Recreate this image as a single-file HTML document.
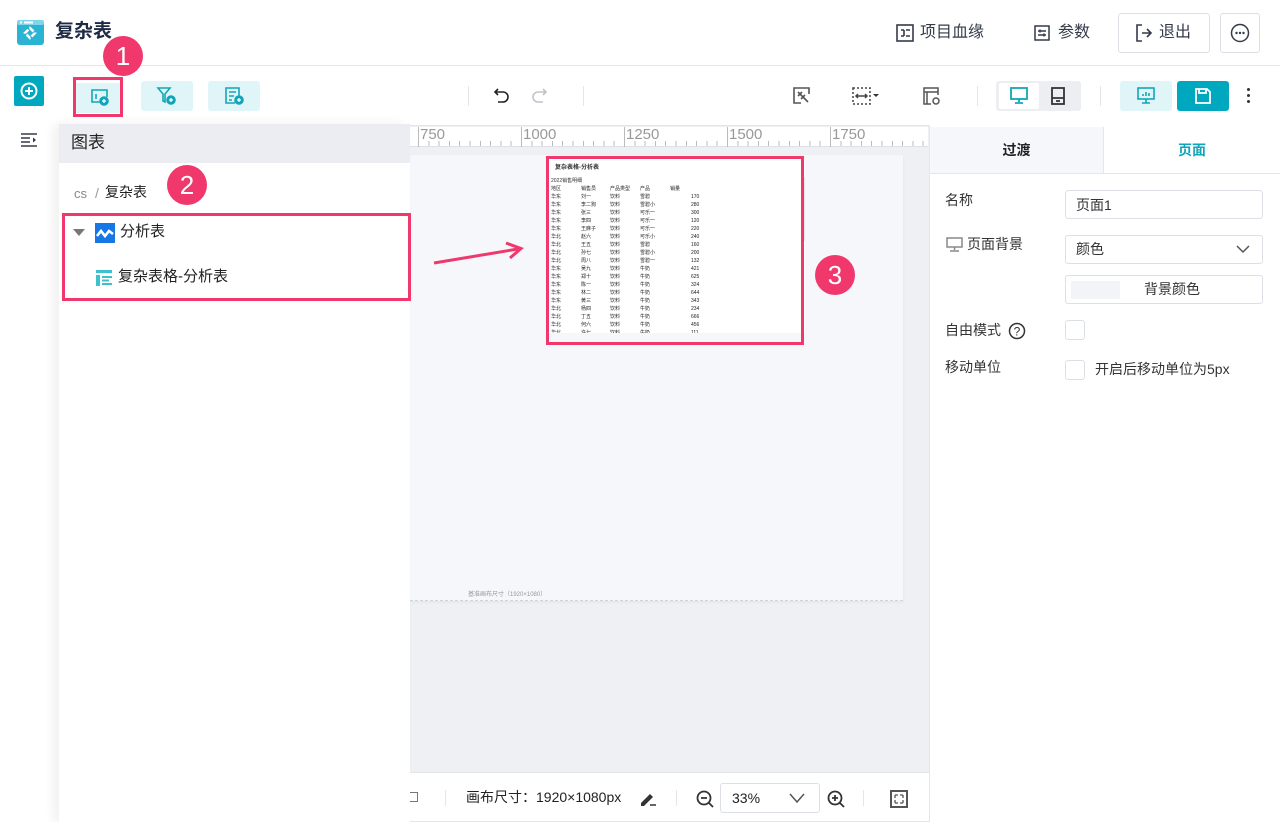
<!DOCTYPE html>
<html><head><meta charset="utf-8"><style>
*{box-sizing:border-box;margin:0;padding:0}
body{width:1280px;height:822px;overflow:hidden;background:#fff;font-family:"Liberation Sans","Noto Sans CJK SC",sans-serif;color:#333;position:relative;font-size:14px;line-height:1.2}
.abs{position:absolute}
.badge{position:absolute;width:40px;height:40px;border-radius:50%;background:#f0386c;color:#fff;font-size:26px;text-align:center;line-height:40px}
.pink{position:absolute;border:3px solid #f0386c}
.tb{position:absolute;top:81px;width:52px;height:30px;background:#e0f5f8;border-radius:3px}
.vsep{position:absolute;width:1px;background:#e4e6ea}
.row{position:absolute;left:0;width:360px;font-size:5px;color:#222;white-space:nowrap}
.row span{position:absolute}
.lbl{position:absolute;left:945px;font-size:14px;color:#333}
.box{position:absolute;border:1px solid #dcdfe6;border-radius:3px;background:#fff}
</style></head><body>
<div class="abs" style="left:0;top:0;width:1280px;height:66px;border-bottom:1px solid #e6e8eb"></div>
<svg class="abs" style="left:17px;top:20px" width="28" height="26" viewBox="0 0 28 26"><rect x="0" y="0" width="27" height="25" rx="3" fill="#2bb3d3"/><rect x="0" y="0" width="27" height="5" rx="2" fill="#7fd6ea"/><rect x="3" y="1.5" width="2" height="2" fill="#fff"/><rect x="7" y="1.5" width="9" height="2" fill="#fff"/><path d="M13 8l5 5-5 5-5-5z" fill="none" stroke="#fff" stroke-width="2.5" stroke-dasharray="5 2"/></svg>
<div class="abs" style="left:55px;top:21px;font-size:19px;font-weight:bold;color:#1f2a44">复杂表</div>
<svg class="abs" style="left:896px;top:24px" width="18" height="18" viewBox="0 0 18 18" fill="none" stroke="#333a4a" stroke-width="1.6"><rect x="1" y="1" width="16" height="16"/><path d="M5 6h3M5 12h3M8 6v6M10 6h4M10 12h4"/></svg>
<div class="abs" style="left:920px;top:23px;font-size:16px;color:#333a4a">项目血缘</div>
<svg class="abs" style="left:1034px;top:25px" width="16" height="16" viewBox="0 0 16 16" fill="none" stroke="#333a4a" stroke-width="1.5"><rect x="1" y="1" width="14" height="14"/><path d="M4 6h8M4 10h8M6 4.5v3M10 8.5v3"/></svg>
<div class="abs" style="left:1058px;top:23px;font-size:16px;color:#333a4a">参数</div>
<div class="box" style="left:1118px;top:13px;width:92px;height:40px"></div>
<svg class="abs" style="left:1135px;top:24px" width="18" height="18" viewBox="0 0 18 18" fill="none" stroke="#333a4a" stroke-width="1.6"><path d="M7 1H2v16h5M7 9h9M12 5l4 4-4 4"/></svg>
<div class="abs" style="left:1159px;top:23px;font-size:16px;color:#333a4a">退出</div>
<div class="box" style="left:1220px;top:13px;width:40px;height:40px"></div>
<svg class="abs" style="left:1230px;top:23px" width="20" height="20" viewBox="0 0 20 20"><circle cx="10" cy="10" r="8.5" fill="none" stroke="#333a4a" stroke-width="1.5"/><circle cx="6.5" cy="10" r="1.2" fill="#333a4a"/><circle cx="10" cy="10" r="1.2" fill="#333a4a"/><circle cx="13.5" cy="10" r="1.2" fill="#333a4a"/></svg>

<div class="abs" style="left:14px;top:76px;width:30px;height:30px;background:#00a8bf;border-radius:2px"></div>
<svg class="abs" style="left:19px;top:81px" width="20" height="20" viewBox="0 0 20 20" fill="none" stroke="#fff" stroke-width="2"><circle cx="10" cy="10" r="7.5"/><path d="M10 6v8M6 10h8"/></svg>
<svg class="abs" style="left:21px;top:133px" width="16" height="14" viewBox="0 0 16 14" fill="none" stroke="#333a4a" stroke-width="1.6"><path d="M0 1h16M0 5h9M0 9h9M0 13h16"/><path d="M12 4.5l3 2.5-3 2.5z" fill="#333a4a" stroke="none"/></svg>

<div class="tb" style="left:74px;width:48px;top:83px;height:30px"></div>
<div class="pink" style="left:73px;top:77px;width:50px;height:40px"></div>
<svg class="abs" style="left:90px;top:87px" width="20" height="20" viewBox="0 0 20 20" fill="none" stroke="#11a6b7" stroke-width="1.6"><path d="M11 15H2V3h15v7"/><path d="M6 7v5"/><circle cx="14" cy="14" r="4" fill="#11a6b7"/><path d="M14 12v4M12 14h4" stroke="#fff" stroke-width="1.3"/></svg>
<div class="tb" style="left:141px"></div>
<svg class="abs" style="left:156px;top:86px" width="22" height="20" viewBox="0 0 22 20" fill="none" stroke="#11a6b7" stroke-width="1.6"><path d="M2 2h12l-5 6v8l-2-1V8z"/><circle cx="15" cy="14" r="4" fill="#11a6b7"/><path d="M15 12v4M13 14h4" stroke="#fff" stroke-width="1.3"/></svg>
<div class="tb" style="left:208px"></div>
<svg class="abs" style="left:224px;top:86px" width="22" height="20" viewBox="0 0 22 20" fill="none" stroke="#11a6b7" stroke-width="1.6"><path d="M11 17H2V2h13v8M5 6h7M5 10h5M5 14h3"/><circle cx="15" cy="14" r="4" fill="#11a6b7"/><path d="M15 12v4M13 14h4" stroke="#fff" stroke-width="1.3"/></svg>
<div class="badge" style="left:103px;top:36px">1</div>
<div class="vsep" style="left:468px;top:86px;height:20px"></div>
<svg class="abs" style="left:493px;top:86px" width="18" height="18" viewBox="0 0 18 18" fill="none" stroke="#222" stroke-width="1.6"><path d="M5 3L2 6l3 3"/><path d="M2 6h8a5 5 0 010 10H5"/></svg>
<svg class="abs" style="left:530px;top:86px" width="18" height="18" viewBox="0 0 18 18" fill="none" stroke="#c0c4cc" stroke-width="1.6"><path d="M13 3l3 3-3 3"/><path d="M16 6H8a5 5 0 000 10h5"/></svg>
<div class="vsep" style="left:583px;top:86px;height:20px"></div>
<svg class="abs" style="left:793px;top:87px" width="18" height="18" viewBox="0 0 18 18" fill="none" stroke="#555" stroke-width="1.6"><path d="M8 16H1V1h15v6"/><path d="M5 5l10 10M9 5l-4 4M12 8l-4 4"/></svg>
<svg class="abs" style="left:852px;top:87px" width="30" height="18" viewBox="0 0 30 18" fill="none" stroke="#444" stroke-width="1.5"><rect x="1" y="1" width="17" height="16" stroke-dasharray="2 2"/><path d="M4 9h11M6 7l-2 2 2 2M13 7l2 2-2 2"/><path d="M21 7h6l-3 3z" fill="#333" stroke="none"/></svg>
<svg class="abs" style="left:923px;top:87px" width="20" height="20" viewBox="0 0 20 20" fill="none" stroke="#555" stroke-width="1.5"><path d="M8 17H1V1h14v7M1 5h14M4 5v12"/><circle cx="13" cy="14" r="3"/></svg>
<div class="vsep" style="left:977px;top:86px;height:20px"></div>
<div class="abs" style="left:996px;top:81px;width:85px;height:30px;background:#eceef2;border-radius:3px"></div>
<div class="abs" style="left:999px;top:83px;width:40px;height:26px;background:#fff;border-radius:2px"></div>
<svg class="abs" style="left:1010px;top:87px" width="18" height="18" viewBox="0 0 18 18" fill="none" stroke="#11a6b7" stroke-width="1.8"><rect x="1" y="1" width="16" height="11"/><path d="M9 12v3M5 16h8"/></svg>
<svg class="abs" style="left:1051px;top:87px" width="14" height="18" viewBox="0 0 14 18" fill="none" stroke="#333" stroke-width="1.8"><rect x="1" y="1" width="12" height="16"/><path d="M1 11h12M5 14h4"/></svg>
<div class="vsep" style="left:1100px;top:86px;height:20px"></div>
<div class="abs" style="left:1120px;top:81px;width:52px;height:30px;background:#e0f5f8;border-radius:3px"></div>
<svg class="abs" style="left:1137px;top:87px" width="18" height="18" viewBox="0 0 18 18" fill="none" stroke="#11a6b7" stroke-width="1.6"><rect x="1" y="1" width="16" height="11"/><path d="M9 12v4M5 16h8M6 9V7M9 9V5M12 9V6"/></svg>
<div class="abs" style="left:1177px;top:81px;width:52px;height:30px;background:#00a8bf;border-radius:3px"></div>
<svg class="abs" style="left:1195px;top:88px" width="16" height="16" viewBox="0 0 16 16" fill="none" stroke="#fff" stroke-width="1.8"><path d="M1 1h11l3 3v11H1z"/><path d="M4 1v4h7V1"/></svg>
<div class="abs" style="left:1247px;top:88px;width:3px;height:3px;background:#333;border-radius:50%;box-shadow:0 6px 0 #333,0 12px 0 #333"></div>

<div class="abs" style="left:59px;top:125px;width:870px;height:648px;background:#eef0f4;border-top:1px solid #e4e6ea"></div>
<div class="abs" style="left:410px;top:127px;width:518px;height:20px;background:#fff;border-bottom:1px solid #dcdfe6;
background-image:repeating-linear-gradient(90deg,#bbb 0 1px,transparent 1px 10.3px);background-size:100% 5px;background-repeat:no-repeat;background-position:8px 14px"></div>
<div class="abs" style="left:418px;top:127px;width:1px;height:20px;background:#bbb"></div>
<div class="abs" style="left:521px;top:127px;width:1px;height:20px;background:#bbb"></div>
<div class="abs" style="left:624px;top:127px;width:1px;height:20px;background:#bbb"></div>
<div class="abs" style="left:727px;top:127px;width:1px;height:20px;background:#bbb"></div>
<div class="abs" style="left:830px;top:127px;width:1px;height:20px;background:#bbb"></div>
<div class="abs" style="left:420px;top:126px;font-size:15px;color:#999">750</div>
<div class="abs" style="left:523px;top:126px;font-size:15px;color:#999">1000</div>
<div class="abs" style="left:626px;top:126px;font-size:15px;color:#999">1250</div>
<div class="abs" style="left:729px;top:126px;font-size:15px;color:#999">1500</div>
<div class="abs" style="left:832px;top:126px;font-size:15px;color:#999">1750</div>
<div class="abs" style="left:410px;top:155px;width:493px;height:446px;background:#f6f7fa;border-bottom:1px dashed #d0d3da;box-shadow:0 1px 3px rgba(0,0,0,.06)"></div>
<div class="abs" style="left:468px;top:592px;font-size:6px;color:#999">基准画布尺寸（1920×1080）</div>
<div class="abs" style="left:549px;top:159px;width:256px;height:174px;background:#fff;overflow:hidden">
<div class="abs" style="left:6px;top:6px;font-size:6px;font-weight:bold;color:#333">复杂表格-分析表</div>
<div class="abs" style="left:2px;top:19px;font-size:5px;color:#333">2022销售明细</div>
<div class="abs" style="left:255px;top:18px;width:2px;height:64px;background:#e4e6ea"></div>
<div class="row" style="top:27px"><span style="left:2px">地区</span><span style="left:32px">销售员</span><span style="left:61px">产品类型</span><span style="left:91px">产品</span><span style="left:121px">销量</span></div>
<div class="row" style="top:35px"><span style="left:2px">华东</span><span style="left:32px">刘一</span><span style="left:61px">饮料</span><span style="left:91px">雪碧</span><span style="left:142px">170</span></div>
<div class="row" style="top:43px"><span style="left:2px">华东</span><span style="left:32px">李二狗</span><span style="left:61px">饮料</span><span style="left:91px">雪碧小</span><span style="left:142px">280</span></div>
<div class="row" style="top:51px"><span style="left:2px">华东</span><span style="left:32px">张三</span><span style="left:61px">饮料</span><span style="left:91px">可乐一</span><span style="left:142px">300</span></div>
<div class="row" style="top:59px"><span style="left:2px">华东</span><span style="left:32px">李四</span><span style="left:61px">饮料</span><span style="left:91px">可乐一</span><span style="left:142px">120</span></div>
<div class="row" style="top:67px"><span style="left:2px">华东</span><span style="left:32px">王麻子</span><span style="left:61px">饮料</span><span style="left:91px">可乐一</span><span style="left:142px">220</span></div>
<div class="row" style="top:75px"><span style="left:2px">华北</span><span style="left:32px">赵六</span><span style="left:61px">饮料</span><span style="left:91px">可乐小</span><span style="left:142px">240</span></div>
<div class="row" style="top:83px"><span style="left:2px">华北</span><span style="left:32px">王五</span><span style="left:61px">饮料</span><span style="left:91px">雪碧</span><span style="left:142px">160</span></div>
<div class="row" style="top:91px"><span style="left:2px">华北</span><span style="left:32px">孙七</span><span style="left:61px">饮料</span><span style="left:91px">雪碧小</span><span style="left:142px">200</span></div>
<div class="row" style="top:99px"><span style="left:2px">华北</span><span style="left:32px">周八</span><span style="left:61px">饮料</span><span style="left:91px">雪碧一</span><span style="left:142px">132</span></div>
<div class="row" style="top:107px"><span style="left:2px">华东</span><span style="left:32px">吴九</span><span style="left:61px">饮料</span><span style="left:91px">牛奶</span><span style="left:142px">421</span></div>
<div class="row" style="top:115px"><span style="left:2px">华东</span><span style="left:32px">郑十</span><span style="left:61px">饮料</span><span style="left:91px">牛奶</span><span style="left:142px">625</span></div>
<div class="row" style="top:123px"><span style="left:2px">华东</span><span style="left:32px">陈一</span><span style="left:61px">饮料</span><span style="left:91px">牛奶</span><span style="left:142px">324</span></div>
<div class="row" style="top:131px"><span style="left:2px">华东</span><span style="left:32px">林二</span><span style="left:61px">饮料</span><span style="left:91px">牛奶</span><span style="left:142px">644</span></div>
<div class="row" style="top:139px"><span style="left:2px">华东</span><span style="left:32px">黄三</span><span style="left:61px">饮料</span><span style="left:91px">牛奶</span><span style="left:142px">343</span></div>
<div class="row" style="top:147px"><span style="left:2px">华北</span><span style="left:32px">杨四</span><span style="left:61px">饮料</span><span style="left:91px">牛奶</span><span style="left:142px">234</span></div>
<div class="row" style="top:155px"><span style="left:2px">华北</span><span style="left:32px">丁五</span><span style="left:61px">饮料</span><span style="left:91px">牛奶</span><span style="left:142px">666</span></div>
<div class="row" style="top:163px"><span style="left:2px">华北</span><span style="left:32px">何六</span><span style="left:61px">饮料</span><span style="left:91px">牛奶</span><span style="left:142px">456</span></div>
<div class="row" style="top:171px"><span style="left:2px">华北</span><span style="left:32px">许七</span><span style="left:61px">饮料</span><span style="left:91px">牛奶</span><span style="left:142px">111</span></div>
</div>
<div class="pink" style="left:546px;top:156px;width:258px;height:189px"></div>
<div class="badge" style="left:815px;top:255px">3</div>
<svg class="abs" style="left:430px;top:240px" width="95" height="28" viewBox="0 0 95 28"><path d="M4 23L88 9" stroke="#f0386c" stroke-width="3" fill="none"/><path d="M76 3L91 8.5 80 18" stroke="#f0386c" stroke-width="3" fill="none"/></svg>

<div class="abs" style="left:59px;top:772px;width:870px;height:50px;background:#fff;border-top:1px solid #e4e6ea;border-bottom:1px solid #e4e6ea"></div>
<div class="abs" style="left:407px;top:792px;width:11px;height:10px;border:1px solid #777"></div>
<div class="vsep" style="left:445px;top:790px;height:16px"></div>
<div class="abs" style="left:466px;top:789px;font-size:14px;color:#222">画布尺寸：1920×1080px</div>
<svg class="abs" style="left:638px;top:790px" width="20" height="16" viewBox="0 0 20 16"><path d="M3 13l9-9 3 3-9 9H3z" fill="#333"/><path d="M12 15h6" stroke="#333" stroke-width="1.5"/></svg>
<div class="vsep" style="left:676px;top:790px;height:16px"></div>
<svg class="abs" style="left:695px;top:789px" width="20" height="20" viewBox="0 0 20 20" fill="none" stroke="#333" stroke-width="1.8"><circle cx="9" cy="9" r="6.5"/><path d="M6 9h6M14 14l4 4"/></svg>
<div class="box" style="left:720px;top:783px;width:100px;height:30px"></div>
<div class="abs" style="left:732px;top:790px;font-size:14px;color:#222">33%</div>
<svg class="abs" style="left:788px;top:792px" width="18" height="12" viewBox="0 0 18 12" fill="none" stroke="#555" stroke-width="1.5"><path d="M2 2l7 8 7-8"/></svg>
<svg class="abs" style="left:826px;top:789px" width="20" height="20" viewBox="0 0 20 20" fill="none" stroke="#333" stroke-width="1.8"><circle cx="9" cy="9" r="6.5"/><path d="M6 9h6M9 6v6M14 14l4 4"/></svg>
<div class="vsep" style="left:863px;top:790px;height:16px"></div>
<svg class="abs" style="left:890px;top:790px" width="18" height="18" viewBox="0 0 18 18" fill="none" stroke="#555" stroke-width="2"><rect x="1" y="1" width="16" height="16"/><path d="M5 5h3M5 5v3M13 5h-3M13 5v3M5 13h3M5 13v-3M13 13h-3M13 13v-3" stroke-width="1.3"/></svg>

<div class="abs" style="left:59px;top:124px;width:351px;height:698px;background:#fff;box-shadow:-6px 0 10px rgba(0,0,0,.06)"></div>
<div class="abs" style="left:59px;top:124px;width:351px;height:39px;background:#ecedf2"></div>
<div class="abs" style="left:71px;top:133px;font-size:17px;color:#222">图表</div>
<div class="abs" style="left:74px;top:186px;font-size:13px;color:#888">cs</div>
<div class="abs" style="left:95px;top:185px;font-size:14px;color:#999">/</div>
<div class="abs" style="left:105px;top:184px;font-size:14px;color:#222">复杂表</div>
<div class="badge" style="left:167px;top:165px">2</div>
<div class="pink" style="left:62px;top:213px;width:349px;height:88px"></div>
<svg class="abs" style="left:73px;top:229px" width="12" height="8" viewBox="0 0 12 8"><path d="M0 0h12L6 7z" fill="#777"/></svg>
<svg class="abs" style="left:95px;top:223px" width="20" height="20" viewBox="0 0 20 20"><rect width="20" height="20" fill="#1677e5"/><path d="M2 13l4-5 4 5 4-5 4 3" stroke="#fff" stroke-width="2.6" fill="none"/></svg>
<div class="abs" style="left:120px;top:223px;font-size:15px;color:#222">分析表</div>
<svg class="abs" style="left:96px;top:270px" width="16" height="16" viewBox="0 0 16 16"><rect x="0" y="0" width="16" height="3" fill="#3ec1cf"/><rect x="0" y="5" width="4" height="11" fill="#3ec1cf"/><rect x="6" y="6" width="10" height="2" fill="#3ec1cf"/><rect x="6" y="13" width="10" height="2" fill="#3ec1cf"/><rect x="6" y="9.5" width="7" height="2" fill="#3ec1cf"/></svg>
<div class="abs" style="left:118px;top:268px;font-size:15px;color:#222">复杂表格-分析表</div>

<div class="abs" style="left:929px;top:125px;width:351px;height:697px;background:#fff;border-left:1px solid #e4e6ea"></div>
<div class="abs" style="left:930px;top:127px;width:173px;height:47px;background:#f5f7fa;border-bottom:1px solid #e4e6ea;text-align:center;line-height:47px;font-size:14px;font-weight:bold;color:#222">过渡</div>
<div class="abs" style="left:1103px;top:127px;width:177px;height:47px;background:#fff;border-bottom:1px solid #e4e6ea;border-left:1px solid #e4e6ea;text-align:center;line-height:47px;font-size:14px;font-weight:bold;color:#11a6b7">页面</div>
<div class="lbl" style="top:192px">名称</div>
<div class="box" style="left:1065px;top:190px;width:198px;height:29px"></div>
<div class="abs" style="left:1076px;top:197px;font-size:14px;color:#333">页面1</div>
<svg class="abs" style="left:946px;top:237px" width="17" height="15" viewBox="0 0 17 15" fill="none" stroke="#888" stroke-width="1.5"><rect x="1" y="1" width="15" height="9"/><path d="M8.5 10v3M4 14h9"/></svg>
<div class="lbl" style="left:967px;top:236px">页面背景</div>
<div class="box" style="left:1065px;top:235px;width:198px;height:29px"></div>
<div class="abs" style="left:1076px;top:241px;font-size:14px;color:#333">颜色</div>
<svg class="abs" style="left:1235px;top:244px" width="16" height="10" viewBox="0 0 16 10" fill="none" stroke="#555" stroke-width="1.5"><path d="M2 2l6 6 6-6"/></svg>
<div class="box" style="left:1065px;top:275px;width:198px;height:29px"></div>
<div class="abs" style="left:1071px;top:281px;width:49px;height:18px;background:#f3f4f7"></div>
<div class="abs" style="left:1144px;top:281px;font-size:14px;color:#333">背景颜色</div>
<div class="lbl" style="top:322px">自由模式</div>
<svg class="abs" style="left:1008px;top:322px" width="18" height="18" viewBox="0 0 18 18"><circle cx="9" cy="9" r="7.5" fill="none" stroke="#333" stroke-width="1.5"/><text x="9" y="13.5" font-size="12" text-anchor="middle" fill="#333" font-family="Liberation Sans">?</text></svg>
<div class="box" style="left:1065px;top:320px;width:20px;height:20px"></div>
<div class="lbl" style="top:359px">移动单位</div>
<div class="box" style="left:1065px;top:360px;width:20px;height:20px"></div>
<div class="abs" style="left:1095px;top:361px;font-size:14px;color:#333">开启后移动单位为5px</div>
</body></html>
